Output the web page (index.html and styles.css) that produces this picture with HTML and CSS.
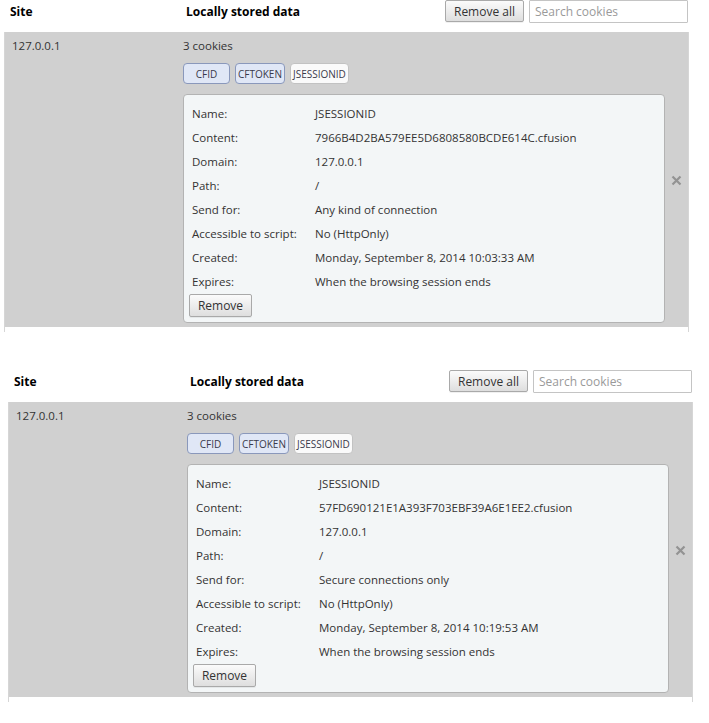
FILE: index.html
```html
<!DOCTYPE html>
<html>
<head>
<meta charset="utf-8">
<title>Cookies</title>
<link rel="stylesheet" href="styles.css">
</head>
<body>
<div class="panel p1">
  <div class="head">
    <div class="col-site">Site</div>
    <div class="col-data">Locally stored data</div>
    <div class="tools"><button class="btn btn-all">Remove all</button><input class="search" type="text" placeholder="Search cookies"></div>
  </div>
  <div class="list">
    <div class="row">
      <div class="site">127.0.0.1</div>
      <div class="data">
        <div class="count">3 cookies</div>
        <div class="chips"><span class="chip">CFID</span><span class="chip">CFTOKEN</span><span class="chip sel">JSESSIONID</span></div>
        <div class="details">
          <div class="grid">
            <span class="k">Name:</span><span class="v">JSESSIONID</span>
            <span class="k">Content:</span><span class="v">7966B4D2BA579EE5D6808580BCDE614C.cfusion</span>
            <span class="k">Domain:</span><span class="v">127.0.0.1</span>
            <span class="k">Path:</span><span class="v">/</span>
            <span class="k">Send for:</span><span class="v">Any kind of connection</span>
            <span class="k">Accessible to script:</span><span class="v">No (HttpOnly)</span>
            <span class="k">Created:</span><span class="v">Monday, September 8, 2014 10:03:33 AM</span>
            <span class="k">Expires:</span><span class="v">When the browsing session ends</span>
          </div>
          <button class="btn btn-rm">Remove</button>
        </div>
      </div>
      <div class="close"><svg width="11" height="11" viewBox="0 0 11 11"><path d="M1.5 1.5 L9.5 9.5 M9.5 1.5 L1.5 9.5" stroke="#939393" stroke-width="2.2" fill="none"/></svg></div>
    </div>
  </div>
</div>
<div class="panel p2">
  <div class="head">
    <div class="col-site">Site</div>
    <div class="col-data">Locally stored data</div>
    <div class="tools"><button class="btn btn-all">Remove all</button><input class="search" type="text" placeholder="Search cookies"></div>
  </div>
  <div class="list">
    <div class="row">
      <div class="site">127.0.0.1</div>
      <div class="data">
        <div class="count">3 cookies</div>
        <div class="chips"><span class="chip">CFID</span><span class="chip">CFTOKEN</span><span class="chip sel">JSESSIONID</span></div>
        <div class="details">
          <div class="grid">
            <span class="k">Name:</span><span class="v">JSESSIONID</span>
            <span class="k">Content:</span><span class="v">57FD690121E1A393F703EBF39A6E1EE2.cfusion</span>
            <span class="k">Domain:</span><span class="v">127.0.0.1</span>
            <span class="k">Path:</span><span class="v">/</span>
            <span class="k">Send for:</span><span class="v">Secure connections only</span>
            <span class="k">Accessible to script:</span><span class="v">No (HttpOnly)</span>
            <span class="k">Created:</span><span class="v">Monday, September 8, 2014 10:19:53 AM</span>
            <span class="k">Expires:</span><span class="v">When the browsing session ends</span>
          </div>
          <button class="btn btn-rm">Remove</button>
        </div>
      </div>
      <div class="close"><svg width="11" height="11" viewBox="0 0 11 11"><path d="M1.5 1.5 L9.5 9.5 M9.5 1.5 L1.5 9.5" stroke="#939393" stroke-width="2.2" fill="none"/></svg></div>
    </div>
  </div>
</div>
</body>
</html>
```
FILE: styles.css
```css
* { box-sizing: border-box; }
body {
  margin: 0;
  background: #fff;
  font-family: "Open Sans", "Noto Sans", sans-serif;
  font-size: 11.5px;
  color: #333;
}
.panel {
  width: 685px;
  height: 370px;
}
.p1 { margin-left: 4px; }
.p2 { margin-left: 8px; }
.head {
  height: 32px;
  display: flex;
  align-items: flex-start;
}
.col-site, .col-data {
  font-weight: bold;
  color: #000;
  font-size: 12px;
  line-height: 18px;
  padding-top: 3px;
}
.col-site { width: 182px; padding-left: 6px; }
.col-data { flex: 1; }
.tools {
  display: flex;
  gap: 5px;
  margin-right: 1px;
}
.btn {
  font-family: inherit;
  font-size: 12px;
  color: #333;
  background: linear-gradient(#fbfbfb, #dedede);
  border: 1px solid #a9a9a9;
  border-radius: 2px;
  padding: 0;
  box-shadow: 0 1px 0 rgba(0,0,0,0.06);
}
.btn-all { width: 79px; height: 22px; }
.search {
  width: 159px;
  height: 23px;
  border: 1px solid #c4c4c4;
  border-radius: 1px;
  font-family: inherit;
  font-size: 12px;
  padding: 0 5px;
  outline: none;
}
.search::placeholder { color: #9a9a9a; }
.list {
  border-left: 1px solid #d6d6d6;
  border-right: 1px solid #d6d6d6;
  padding-bottom: 5px;
}
.row {
  background: #d0d0d0;
  display: flex;
  height: 295px;
  padding-left: 7px;
}
.site {
  width: 171px;
  padding-top: 5px;
  line-height: 18px;
}
.data {
  width: 482px;
  padding-top: 5px;
}
.count { line-height: 18px; }
.chips {
  display: flex;
  gap: 5px;
  margin-top: 8px;
}
.chip {
  height: 21px;
  min-width: 47px;
  padding: 0 2px;
  display: flex;
  align-items: center;
  justify-content: center;
  font-size: 10px;
  color: #3a3a4a;
  background: #e0e7f6;
  border: 1px solid #8a98bb;
  border-radius: 4px;
}
.chip.sel {
  background: #fafafa;
  border-color: #c2c2c2;
}
.details {
  margin-top: 10px;
  height: 229px;
  background: #f3f6f7;
  border: 1px solid #b3b3b3;
  border-radius: 4px;
  padding: 7px 5px 5px 5px;
}
.grid {
  display: grid;
  grid-template-columns: 126px 1fr;
  grid-auto-rows: 24px;
  align-items: start;
  line-height: 23px;
}
.k { padding-left: 3px; }
.btn-rm { width: 63px; height: 23px; display: block; }
.close {
  flex: 1;
  display: flex;
  align-items: center;
  justify-content: center;
  padding-top: 1px;
}
```
